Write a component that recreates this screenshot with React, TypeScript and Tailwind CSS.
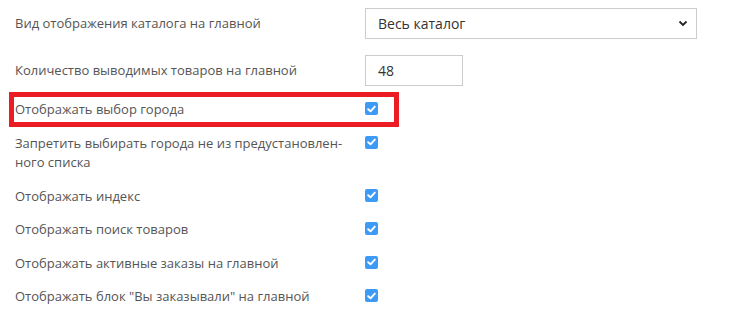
import React from 'react';

const rows = [
  { label: 'Отображать выбор города', highlight: true },
  { label: 'Запретить выбирать города не из предустановлен-\nного списка' },
  { label: 'Отображать индекс' },
  { label: 'Отображать поиск товаров' },
  { label: 'Отображать активные заказы на главной' },
  { label: 'Отображать блок "Вы заказывали" на главной' },
];

function Check() {
  return (
    <span className="mt-[2px] flex h-[13px] w-[13px] items-center justify-center rounded-[2px] bg-[#3d9bf6]">
      <svg width="9" height="8" viewBox="0 0 9 8" fill="none">
        <path d="M1.2 4.2 L3.5 6.3 L7.8 1.6" stroke="white" strokeWidth="1.9" strokeLinecap="round" strokeLinejoin="round" />
      </svg>
    </span>
  );
}

export default function App() {
  return (
    <div
      className="relative h-[313px] w-[740px] overflow-hidden bg-white pl-[15px] pt-[8px] text-[13px] leading-[19.5px] text-[#555]"
      style={{ fontFamily: '"Open Sans", sans-serif' }}
    >
      {/* select row */}
      <div className="flex items-center">
        <div className="w-[350px]">Вид отображения каталога на главной</div>
        <div className="flex h-[31px] w-[332px] items-center justify-between border border-[#ccc] pl-[12px] pr-[8px] text-[14px] text-[#333]">
          <span>Весь каталог</span>
          <svg width="10" height="7" viewBox="0 0 10 7" fill="none">
            <path d="M1.5 1.5 L5 5 L8.5 1.5" stroke="#222" strokeWidth="1.8" />
          </svg>
        </div>
      </div>

      {/* count row */}
      <div className="mt-[16px] flex items-center">
        <div className="w-[350px]">Количество выводимых товаров на главной</div>
        <div className="flex h-[31px] w-[98px] items-center border border-[#ccc] pl-[12px] text-[14px] text-[#333]">
          48
        </div>
      </div>

      <div className="mt-[14px] flex flex-col gap-[14px]">
        {rows.map((row) => (
          <div key={row.label} className="flex items-start">
            <div className="w-[350px] whitespace-pre-line pr-[4px]">{row.label}</div>
            <Check />
          </div>
        ))}
      </div>

      {/* annotation frame */}
      <div className="absolute left-[9px] top-[92px] h-[35px] w-[390px] border-[5px] border-[#ec1c24]" />
    </div>
  );
}
